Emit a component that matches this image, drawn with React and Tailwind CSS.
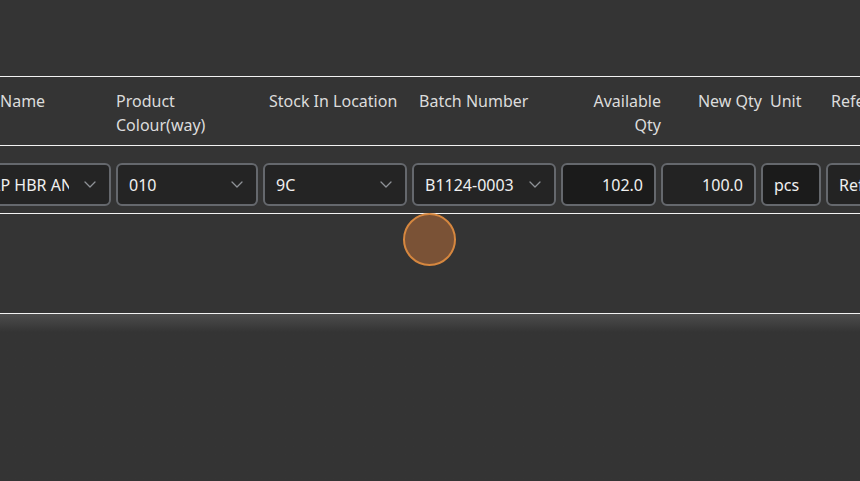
import React from 'react';

const font = { fontFamily: '"Noto Sans", "Open Sans", sans-serif' };

function Chevron() {
  return (
    <svg width="12" height="7" viewBox="0 0 12 7" fill="none" className="shrink-0">
      <path d="M1 1l5 5 5-5" stroke="#8f9297" strokeWidth="1.3" strokeLinecap="round" strokeLinejoin="round" />
    </svg>
  );
}

function Select({ value, className }) {
  return (
    <div className={`h-[43px] flex items-center rounded-[6px] border-2 border-[#65686d] bg-[#242424] pl-[11px] pr-[13px] ${className}`}>
      <span className="flex-1 overflow-hidden whitespace-nowrap text-[#f0f0f0]">{value}</span>
      <span className="ml-[15px]"><Chevron /></span>
    </div>
  );
}

function Field({ value, className, align = 'left', dark }) {
  return (
    <div className={`h-[43px] flex items-center rounded-[6px] border-2 border-[#65686d] px-[11px] overflow-hidden whitespace-nowrap text-[#f0f0f0] ${dark ? 'bg-[#1b1b1b]' : 'bg-[#232323]'} ${align === 'right' ? 'justify-end' : ''} ${className}`}>
      {value}
    </div>
  );
}

export default function App() {
  return (
    <div className="min-h-screen bg-[#343434] text-[16px]" style={font}>
      <div className="h-[76px]" />
      <div className="overflow-hidden">
        <div className="w-[1200px] -ml-[58px]">
          {/* header */}
          <div className="flex border-y border-[#f2f2f2] pt-[12px] pb-[8px] leading-[24px] text-[#dcdcdc]">
            <div className="w-[179px] -ml-[5px] shrink-0">Product Name</div>
            <div className="w-[153px] shrink-0 pr-[16px]">Product Colour(way)</div>
            <div className="w-[150px] shrink-0">Stock In Location</div>
            <div className="w-[171px] shrink-0">Batch Number</div>
            <div className="w-[71px] shrink-0 text-right">Available Qty</div>
            <div className="w-[101px] shrink-0 text-right">New Qty</div>
            <div className="w-[69px] shrink-0 pl-[8px]">Unit</div>
            <div className="shrink-0">Reference</div>
          </div>
          {/* row */}
          <div className="flex gap-[5px] border-b border-[#f2f2f2] pl-[27px] pt-[17px] pb-[7px]">
            <Select value="CLP HBR ANKLE SOCK" className="w-[142px] shrink-0" />
            <Select value="010" className="w-[142px] shrink-0" />
            <Select value="9C" className="w-[144px] shrink-0" />
            <Select value="B1124-0003" className="w-[144px] shrink-0" />
            <Field value="102.0" align="right" dark className="w-[95px] shrink-0" />
            <Field value="100.0" align="right" className="w-[95px] shrink-0" />
            <Field value="pcs" dark className="w-[60px] shrink-0" />
            <Field value="Reference" className="w-[150px] shrink-0" />
          </div>
        </div>
      </div>
      <div className="relative h-[99px]">
        <div className="absolute left-[403px] -top-[1px] w-[53px] h-[53px] rounded-full border-2 border-[#d6873f] bg-[#7a5236]" />
      </div>
      <div className="border-t border-[#f2f2f2] h-[168px] bg-gradient-to-b from-[#4d4d4d] to-[#343434] to-[18px]" />
    </div>
  );
}
